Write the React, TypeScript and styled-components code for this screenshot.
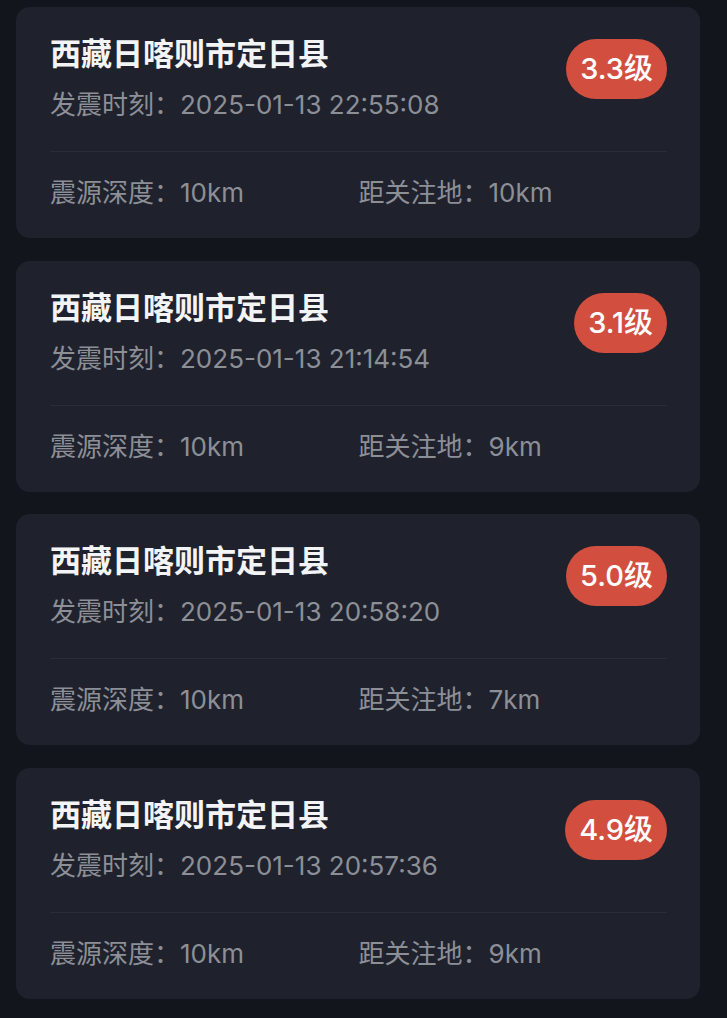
import { FC } from 'react'
import styled, { createGlobalStyle } from 'styled-components'

// ========================================================================
// Style
// ========================================================================

const GlobalStyle = createGlobalStyle`
  html, body {
    margin: 0;
    padding: 0;
    background-color: #13151d;
  }
  body {
    font-family: 'Inter', 'Noto Sans CJK SC', sans-serif;
    -webkit-font-smoothing: antialiased;
  }
`

const Wrap = styled.div`
  display: flex;
  flex-direction: column;
  gap: 22.5px;
  padding: 7px 27px 20px 16px;
`

const Card = styled.div`
  background-color: #1f222d;
  border-radius: 14px;
  padding: 27px 33px 27px 34px;
`

const Head = styled.div`
  display: flex;
  justify-content: space-between;
  align-items: flex-start;
`

const Title = styled.div`
  font-size: 31px;
  line-height: 40px;
  font-weight: 600;
  color: #f3f4f6;
`

const Text = styled.div<{ $mt?: number }>`
  margin-top: ${(p) => p.$mt ?? 0}px;
  font-size: 26px;
  line-height: 36px;
  color: #8d8f97;
  white-space: nowrap;
`

const Badge = styled.div`
  margin-top: 5px;
  height: 60px;
  padding: 0 14px;
  border-radius: 30px;
  background-color: #d24f40;
  color: #fff;
  font-size: 29px;
  line-height: 60px;
  font-weight: 500;
  white-space: nowrap;
`

const Divider = styled.div`
  margin-top: 28px;
  height: 1px;
  background-color: #2a2d38;
`

const Bottom = styled.div`
  display: grid;
  grid-template-columns: 1fr 1fr;
  padding-top: 23px;
`

// ========================================================================
// View
// ========================================================================

type Quake = {
  place: string
  time: string
  level: string
  depth: string
  distance: string
}

const list: Quake[] = [
  { place: '西藏日喀则市定日县', time: '2025-01-13 22:55:08', level: '3.3', depth: '10km', distance: '10km' },
  { place: '西藏日喀则市定日县', time: '2025-01-13 21:14:54', level: '3.1', depth: '10km', distance: '9km' },
  { place: '西藏日喀则市定日县', time: '2025-01-13 20:58:20', level: '5.0', depth: '10km', distance: '7km' },
  { place: '西藏日喀则市定日县', time: '2025-01-13 20:57:36', level: '4.9', depth: '10km', distance: '9km' },
]

const App: FC = () => {
  return (
    <>
      <GlobalStyle />
      <Wrap>
        {list.map((item, i) => (
          <Card key={i}>
            <Head>
              <div>
                <Title>{item.place}</Title>
                <Text $mt={13}>发震时刻：{item.time}</Text>
              </div>
              <Badge>{item.level}级</Badge>
            </Head>
            <Divider />
            <Bottom>
              <Text>震源深度：{item.depth}</Text>
              <Text>距关注地：{item.distance}</Text>
            </Bottom>
          </Card>
        ))}
      </Wrap>
    </>
  )
}

export default App
